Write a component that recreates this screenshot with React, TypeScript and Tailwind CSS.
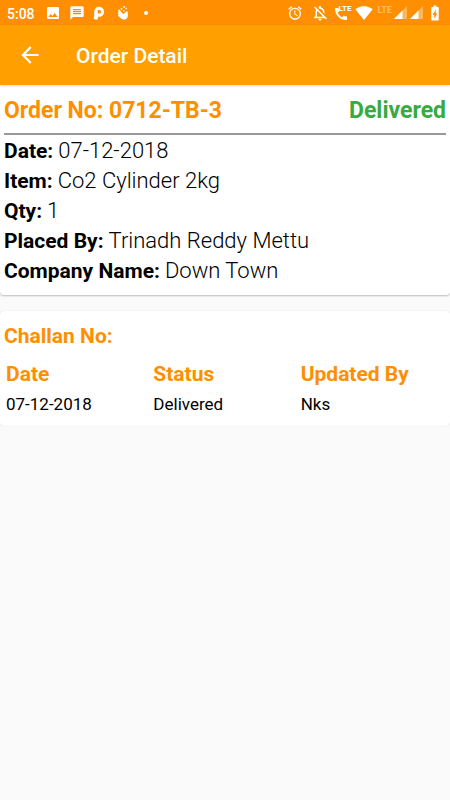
import React from "react";
import {
  MdAlarm,
  MdArrowBack,
  MdBatteryChargingFull,
  MdCall,
  MdImage,
  MdMessage,
  MdOutlineNotificationsOff,
  MdSignalWifi4Bar,
} from "react-icons/md";

const details = [
  { label: "Date:", value: "07-12-2018" },
  { label: "Item:", value: "Co2 Cylinder 2kg" },
  { label: "Qty:", value: "1" },
  { label: "Placed By:", value: "Trinadh Reddy Mettu" },
  { label: "Company Name:", value: "Down Town" },
];

const challans = [{ date: "07-12-2018", status: "Delivered", by: "Nks" }];

function SignalIcon() {
  return (
    <svg viewBox="0 0 14 14" className="size-[14px]" aria-hidden="true">
      <path d="M13 0v13H0z" fill="#fff" fillOpacity="0.35" />
      <path d="M8.500 4.500v8.500H0z" fill="#fff" />
    </svg>
  );
}

function ParkingIcon() {
  return (
    <svg viewBox="0 0 12 14" className="h-[14px] w-3" aria-hidden="true">
      <path
        d="M1.200 6.500A5 5 0 1 1 6.300 10.800H5.200L4.800 12.600A1.600 1.600 0 0 1 3 13.800L.6 12.800 1.200 9.500zM4.700 3.900v3.700h1.600a1.850 1.850 0 0 0 0-3.700z"
        fill="#fff"
        fillRule="evenodd"
      />
    </svg>
  );
}

function SnapIcon() {
  return (
    <svg viewBox="0 0 12 14" className="h-[14px] w-3" fill="#fff" aria-hidden="true">
      <path d="M2.200 3.200 5 7 6.500 8 9.600 5.200 10.600 5.600 10.900 9.500Q10.500 13.300 7.300 13.800 4.500 13.500 2.800 11.500L.8 9.200 1.600 8.500 .6 6.600 1.500 6 1.200 4.200z" />
      <circle cx="4.500" cy="2.800" r="0.900" />
      <circle cx="7.200" cy="1" r="0.900" />
      <circle cx="6.700" cy="4.800" r="0.900" />
      <circle cx="9.200" cy="2.600" r="0.800" />
    </svg>
  );
}

function StatusBar() {
  return (
    <div className="flex h-[25px] items-center justify-between bg-[#ff8f00] pr-1.5 pl-[7px] text-white">
      <div className="flex items-center">
        <span className="w-[38px] pt-0.5 text-[14px] leading-5 font-medium">5:08</span>
        <MdImage className="mr-2 size-4" />
        <MdMessage className="mr-2 size-4" />
        <span className="mr-3 flex">
          <ParkingIcon />
        </span>
        <span className="mr-[15px] flex">
          <SnapIcon />
        </span>
        <span className="size-1 rounded-full bg-white" />
      </div>
      <div className="flex items-center">
        <MdAlarm className="mr-2 size-4" />
        <MdOutlineNotificationsOff className="mr-1 size-[18px]" />
        <span className="mr-1 flex items-start">
          <MdCall className="mt-0.5 -mr-2.5 size-4" />
          <span className="text-[8px] leading-[10px] font-bold">LTE</span>
        </span>
        <MdSignalWifi4Bar className="mr-1 size-[18px]" />
        <span className="mr-0.5 mb-1.5 text-[9px] leading-[8px] font-bold opacity-40">LTE</span>
        <span className="mr-0.5 flex">
          <SignalIcon />
        </span>
        <span className="mr-0.5 flex">
          <SignalIcon />
        </span>
        <MdBatteryChargingFull className="size-[18px]" />
      </div>
    </div>
  );
}

export default function App() {
  return (
    <div className="min-h-screen bg-[#fafafa] font-[Roboto,sans-serif] text-black">
      <StatusBar />
      <header className="relative flex h-[60px] items-center bg-[#ffa000] text-white shadow-sm">
        <button type="button" aria-label="Back" className="ml-[17px]">
          <MdArrowBack className="size-[26px]" />
        </button>
        <h1 className="ml-[33px] pt-0.5 text-[21px] leading-7 font-medium">Order Detail</h1>
      </header>

      <main>
        <section className="rounded-b-sm bg-white px-1 pt-3 pb-[9px] shadow-[0_1px_2px_rgba(0,0,0,0.25)]">
          <div className="flex justify-between border-b-2 border-[#999] pb-2 text-[23px] leading-7 font-bold">
            <h2 className="text-[#ff8f00]">Order No: 0712-TB-3</h2>
            <span className="text-[#37ab3d]">Delivered</span>
          </div>
          <dl className="pt-px leading-[30px]">
            {details.map((d) => (
              <div key={d.label} className="flex items-baseline gap-[5px]">
                <dt className="text-[21px] font-bold">{d.label}</dt>
                <dd className="text-[22px] font-light">{d.value}</dd>
              </div>
            ))}
          </dl>
        </section>

        <section className="mt-4 rounded-sm bg-white px-1 pt-[11px] pb-2 shadow-[0_0_1px_rgba(0,0,0,0.2)]">
          <h2 className="text-[21px] leading-7 font-bold text-[#ff8f00]">Challan No:</h2>
          <table className="mt-2 w-full table-fixed text-left">
            <thead>
              <tr className="text-[21px] leading-8 text-[#ff8f00]">
                <th className="px-0.5 py-0 font-bold">Date</th>
                <th className="px-0.5 py-0 font-bold">Status</th>
                <th className="px-0.5 py-0 font-bold">Updated By</th>
              </tr>
            </thead>
            <tbody>
              {challans.map((c) => (
                <tr key={c.date} className="text-[17px] leading-7">
                  <td className="px-0.5 py-0">{c.date}</td>
                  <td className="px-0.5 py-0">{c.status}</td>
                  <td className="px-0.5 py-0">{c.by}</td>
                </tr>
              ))}
            </tbody>
          </table>
        </section>
      </main>
    </div>
  );
}
